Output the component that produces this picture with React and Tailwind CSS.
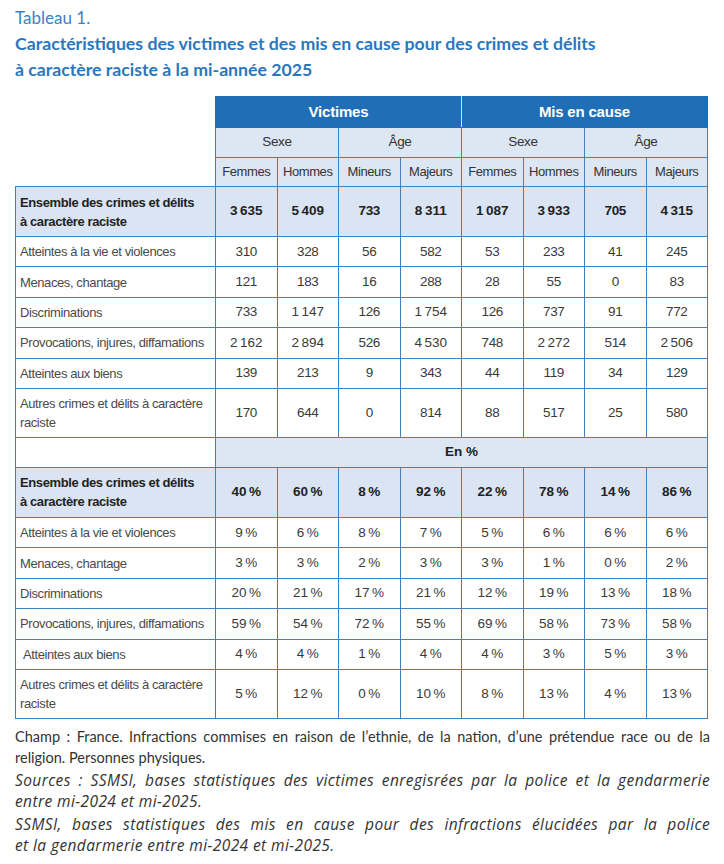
import React from 'react';

const sansFont = { fontFamily: '"Liberation Sans", Arial, sans-serif' };
const bodyFont = { fontFamily: 'Lato, "Open Sans", sans-serif' };
const italicFont = { fontFamily: '"Open Sans", Lato, sans-serif' };

const fmt = (n) => {
  const s = String(n);
  if (s.length <= 3) return s;
  return s.slice(0, s.length - 3) + '\u202F' + s.slice(-3);
};

const pct = (n) => `${n}\u202F%`;

const counts = [
  { label: 'Atteintes à la vie et violences', values: [310, 328, 56, 582, 53, 233, 41, 245] },
  { label: 'Menaces, chantage', values: [121, 183, 16, 288, 28, 55, 0, 83] },
  { label: 'Discriminations', values: [733, 1147, 126, 1754, 126, 737, 91, 772] },
  { label: 'Provocations, injures, diffamations', values: [2162, 2894, 526, 4530, 748, 2272, 514, 2506] },
  { label: 'Atteintes aux biens', values: [139, 213, 9, 343, 44, 119, 34, 129] },
  { label: 'Autres crimes et délits à caractère raciste', values: [170, 644, 0, 814, 88, 517, 25, 580], tall: true },
];

const shares = [
  { label: 'Atteintes à la vie et violences', values: [9, 6, 8, 7, 5, 6, 6, 6] },
  { label: 'Menaces, chantage', values: [3, 3, 2, 3, 3, 1, 0, 2] },
  { label: 'Discriminations', values: [20, 21, 17, 21, 12, 19, 13, 18] },
  { label: 'Provocations, injures, diffamations', values: [59, 54, 72, 55, 69, 58, 73, 58] },
  { label: 'Atteintes aux biens', values: [4, 4, 1, 4, 4, 3, 5, 3], indent: true },
  { label: 'Autres crimes et délits à caractère raciste', values: [5, 12, 0, 10, 8, 13, 4, 13], tall: true },
];

const cell = 'border border-[#3d82c3] text-center align-middle';

const TotalRow = ({ values, format }) => (
  <tr className="h-[50px] bg-[#dae4f2]">
    <td className={`${cell} text-left pl-[4px] pr-1 text-[13px] leading-[19px] tracking-[-0.4px] font-bold text-[#222]`}>
      Ensemble des crimes et délits
      <br />à caractère raciste
    </td>
    {values.map((v, i) => (
      <td key={i} className={`${cell} text-[13.5px] tracking-[-0.3px] font-bold text-[#222]`}>
        {format(v)}
      </td>
    ))}
  </tr>
);

const DataRow = ({ row, format }) => (
  <tr className={row.tall ? 'h-[49px]' : 'h-[30.4px]'}>
    <td
      className={`${cell} text-left ${row.indent ? 'pl-[7px]' : 'pl-[4px]'} pr-1 text-[13px] leading-[19px] tracking-[-0.4px] text-[#4a4a4a]`}
    >
      {row.label}
    </td>
    {row.values.map((v, i) => (
      <td key={i} className={`${cell} text-[13.5px] tracking-[-0.3px] text-[#3a3a3a]`}>
        {format(v)}
      </td>
    ))}
  </tr>
);

export default function App() {
  const sub = ['Femmes', 'Hommes', 'Mineurs', 'Majeurs', 'Femmes', 'Hommes', 'Mineurs', 'Majeurs'];

  return (
    <div className="w-[724px] h-[864px] bg-white overflow-hidden">
      <div className="pl-[15px] pr-[16px] pt-[5px]" style={bodyFont}>
        <div className="text-[17px] leading-[26px] text-[#3b82c4]">Tableau 1.</div>
        <div className="text-[17.7px] leading-[26px] font-bold text-[#2a77bd]">
          Caractéristiques des victimes et des mis en cause pour des crimes et délits
          <br />à caractère raciste à la mi-année 2025
        </div>
      </div>

      <div className="pl-[15px] mt-[13px]" style={sansFont}>
        <table className="w-[693px] table-fixed border-collapse">
          <colgroup>
            <col className="w-[200px]" />
            <col />
            <col />
            <col />
            <col />
            <col />
            <col />
            <col />
            <col />
          </colgroup>
          <thead>
            <tr className="h-[31px]">
              <th className="border-0" />
              <th colSpan={4} className="bg-[#1f6eb6] border border-[#1f6eb6] border-r-[#cfe0f1] text-white text-[15px] tracking-[-0.2px] font-bold">
                Victimes
              </th>
              <th colSpan={4} className="bg-[#1f6eb6] border border-[#1f6eb6] text-white text-[15px] tracking-[-0.2px] font-bold">
                Mis en cause
              </th>
            </tr>
            <tr className="h-[30px] bg-[#dde6f3]">
              <th className="border-0 bg-white" />
              {['Sexe', 'Âge', 'Sexe', 'Âge'].map((t, i) => (
                <th key={i} colSpan={2} className={`${cell} font-normal text-[13.5px] tracking-[-0.3px] text-[#333]`}>
                  {t}
                </th>
              ))}
            </tr>
            <tr className="h-[29px] bg-[#dde6f3]">
              <th className="border-0 bg-white" />
              {sub.map((t, i) => (
                <th key={i} className={`${cell} font-normal text-[13px] tracking-[-0.4px] text-[#333]`}>
                  {t}
                </th>
              ))}
            </tr>
          </thead>
          <tbody>
            <TotalRow values={[3635, 5409, 733, 8311, 1087, 3933, 705, 4315]} format={fmt} />
            {counts.map((r) => (
              <DataRow key={r.label} row={r} format={fmt} />
            ))}
            <tr className="h-[30px]">
              <td className={cell} />
              <td colSpan={8} className={`${cell} bg-[#dde6f3] text-[13.5px] font-bold text-[#222]`}>
                En %
              </td>
            </tr>
            <TotalRow values={[40, 60, 8, 92, 22, 78, 14, 86]} format={pct} />
            {shares.map((r) => (
              <DataRow key={r.label} row={r} format={pct} />
            ))}
          </tbody>
        </table>
      </div>

      <div className="pl-[15px] pr-[14px] mt-[7px] text-[#333]" style={bodyFont}>
        <div className="text-[14.5px] leading-[21px]">
          <div className="text-justify [text-align-last:justify]">
            Champ : France. Infractions commises en raison de l’ethnie, de la nation, d’une prétendue race ou de la
          </div>
          <div>religion. Personnes physiques.</div>
        </div>
        <div className="italic text-[15.5px] leading-[21px] tracking-[0.4px] mt-[2px]" style={italicFont}>
          <div className="text-justify [text-align-last:justify]">
            Sources : SSMSI, bases statistiques des victimes enregisrées par la police et la gendarmerie
          </div>
          <div>entre mi-2024 et mi-2025.</div>
        </div>
        <div className="italic text-[15.5px] leading-[21px] tracking-[0.4px] mt-[2px]" style={italicFont}>
          <div className="text-justify [text-align-last:justify]">
            SSMSI, bases statistiques des mis en cause pour des infractions élucidées par la police
          </div>
          <div>et la gendarmerie entre mi-2024 et mi-2025.</div>
        </div>
      </div>
    </div>
  );
}
